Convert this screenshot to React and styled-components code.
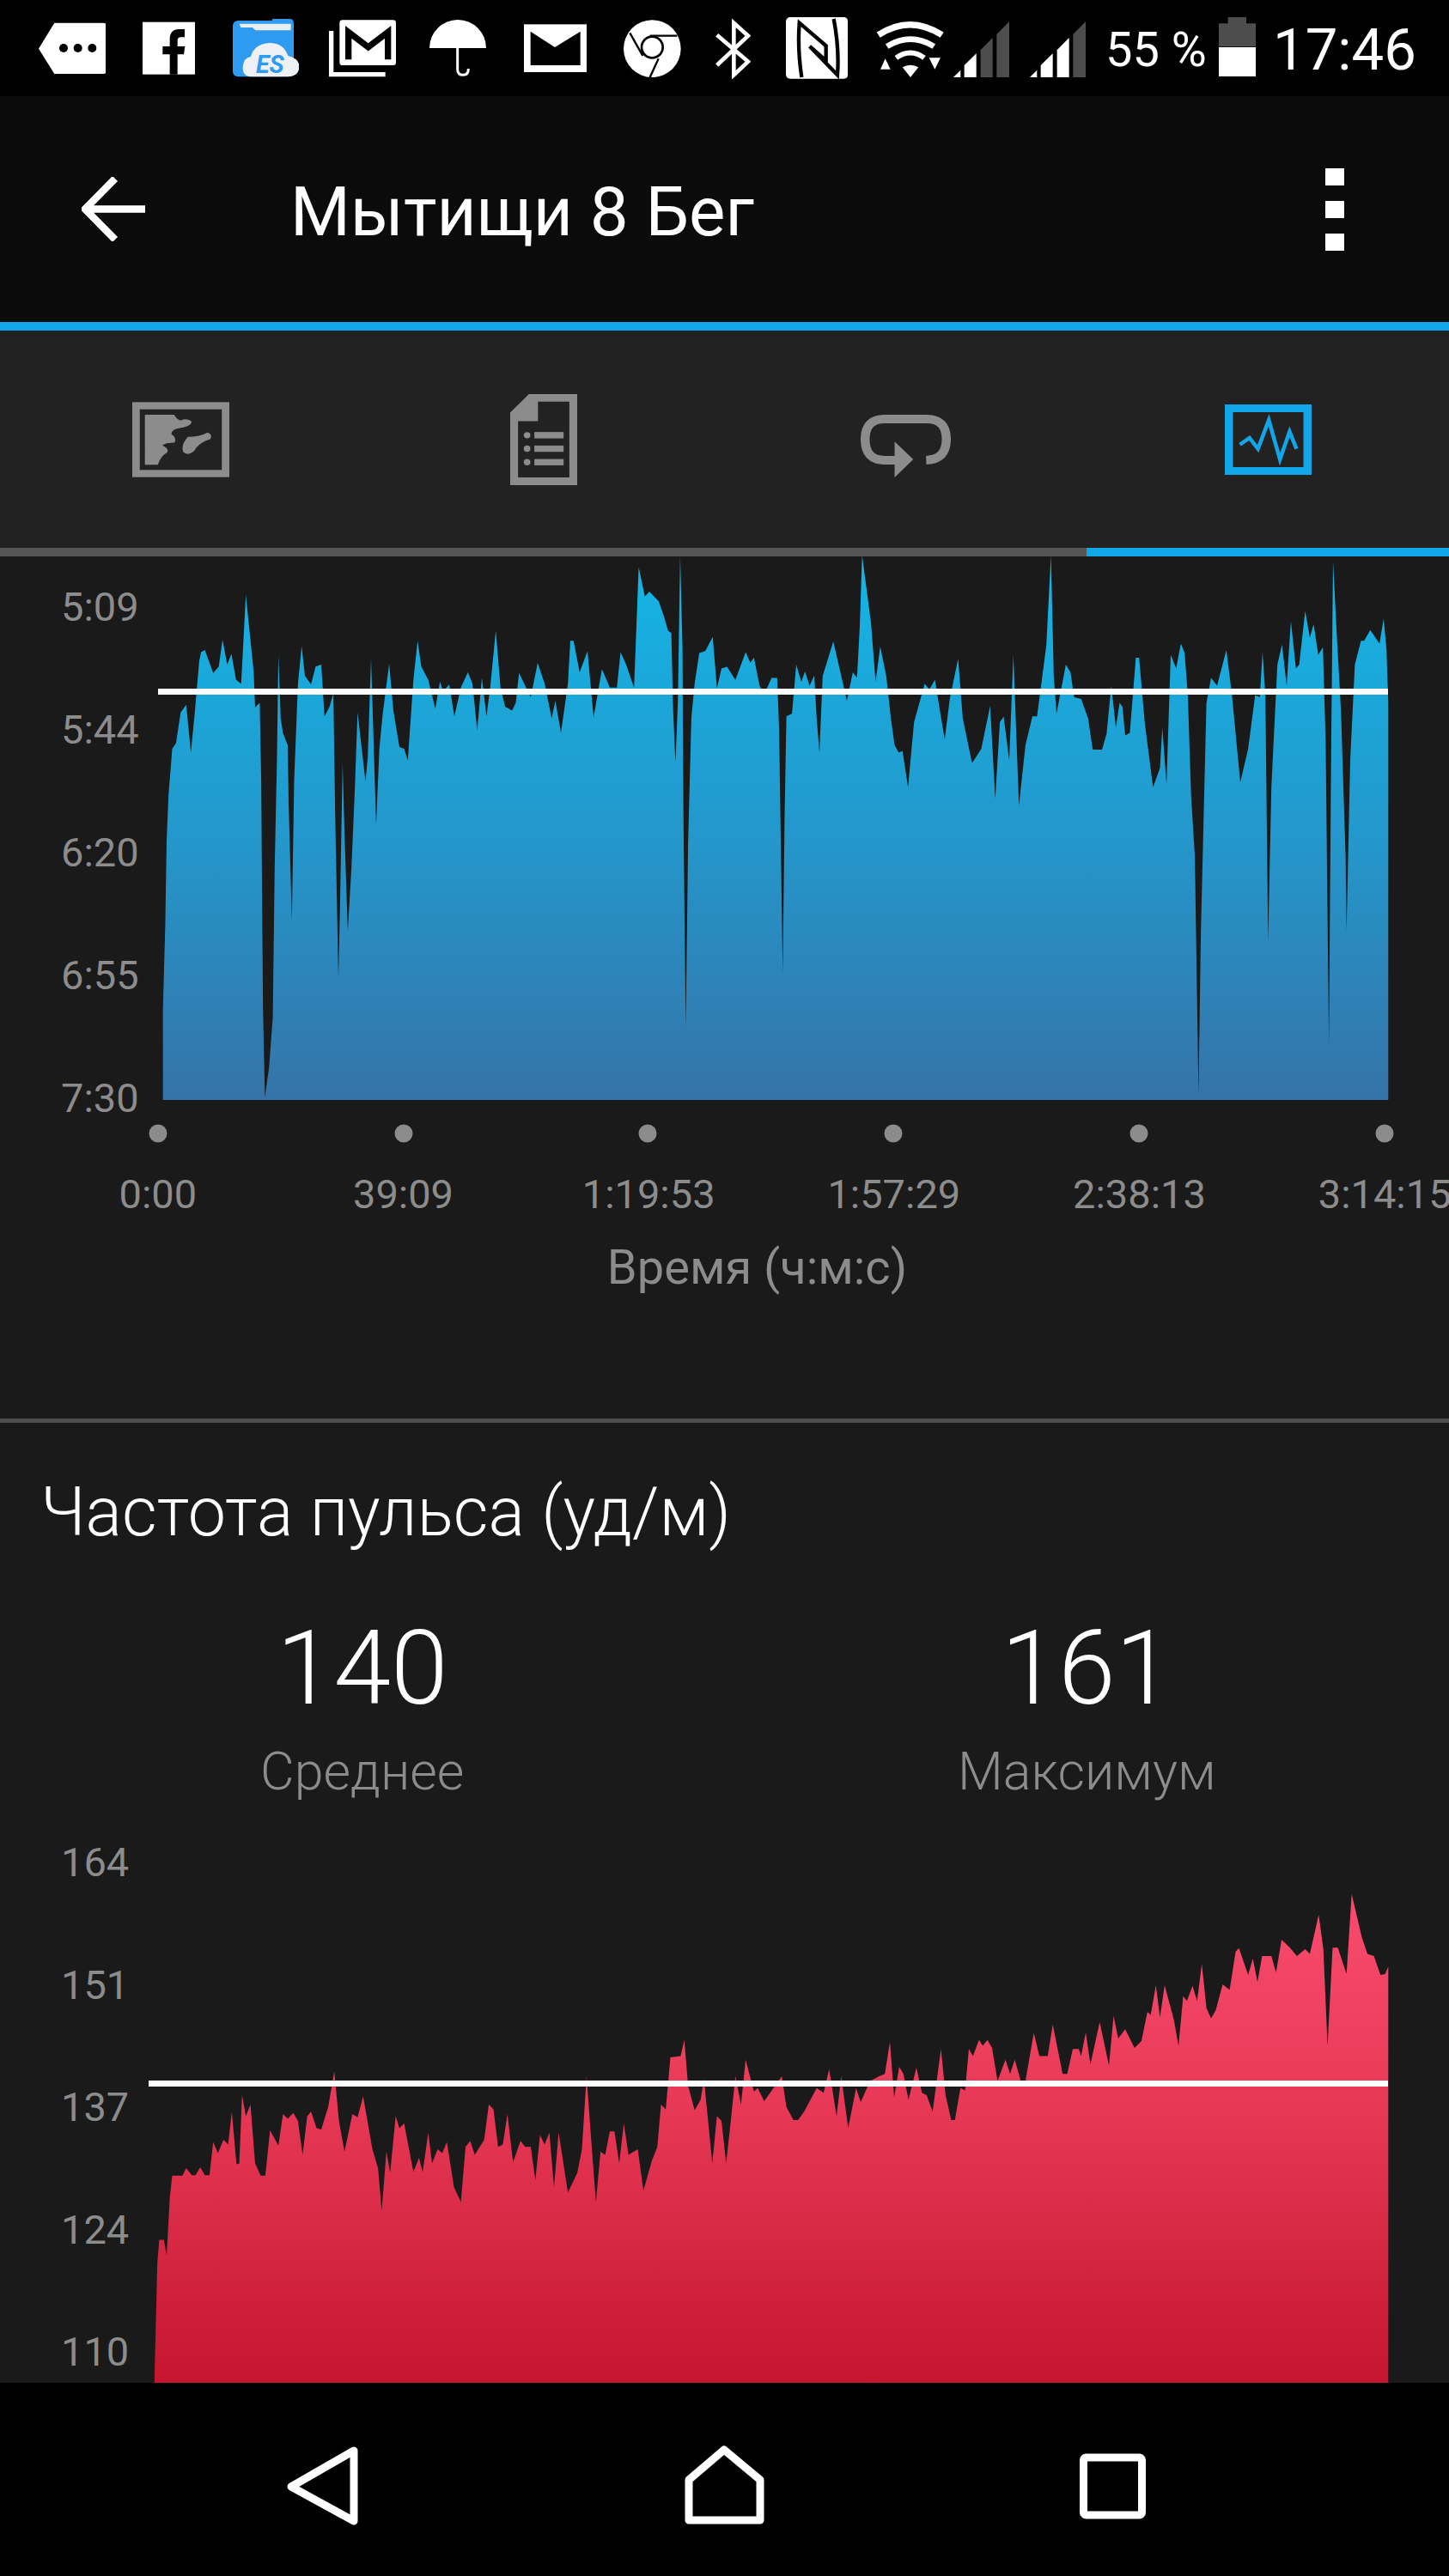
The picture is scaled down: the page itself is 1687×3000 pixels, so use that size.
import React from 'react';
import styled, { createGlobalStyle } from 'styled-components';

const GlobalStyle = createGlobalStyle`
  html, body {
    margin: 0;
    padding: 0;
    background: #000;
  }
`;

const ACCENT = '#12a5e8';
const MUTED = '#8c8c8c';

// traced outline of the pace chart, in zoomed crop pixels
const paceLeft = [[350,1436],[350,1200],[355,980],[358,760],[362,640],[366,580],[370,520],[378,505],[388,425],[400,405],[410,530],[418,430],[428,290],[432,268],[440,262],[458,322],[470,305],[478,235],[488,300],[497,272],[507,340],[518,350],[528,118],[545,320],[548,412],[558,400],[561,600],[563,900],[565,1200],[569,1428],[578,1350],[586,1220],[590,830],[595,540],[598,275],[603,440],[608,480],[618,510],[620,660],[627,968],[632,600],[640,350],[648,252],[655,330],[668,352],[678,305],[690,300],[697,435],[708,410],[716,375],[720,690],[727,1118],[730,950],[736,558],[740,740],[747,995],[755,830],[762,630],[768,425],[785,605],[790,540],[797,285],[800,400],[808,718],[815,520],[822,430],[836,298],[845,420],[858,515],[868,520],[876,550],[888,340],[897,238],[905,305],[920,340],[935,415],[945,345],[952,370],[965,352],[976,435],[990,360],[1005,320],[1015,350],[1025,472],[1035,335],[1045,435],[1053,360],[1065,212],[1075,360],[1085,410],[1100,420],[1108,400],[1115,322],[1140,385],[1155,296],[1170,350],[1185,440],[1193,395],[1205,478],[1220,350],[1225,238],[1232,238],[1245,320],[1262,265],[1275,438],[1293,312],[1310,360],[1325,360],[1333,268],[1345,300],[1362,360],[1372,46],[1385,122],[1395,110],[1415,135],[1425,170],[1435,212],[1442,218],[1446,420],[1451,555],[1456,400],[1461,15],[1466,260],[1468,700],[1473,1248],[1478,770],[1485,440],[1492,350],[1502,270],[1515,265],[1531,228],[1540,362]];
const paceRight = [[0,310],[12,306],[30,340],[52,268],[62,295],[70,282],[82,355],[92,378],[108,335],[120,335],[124,465],[127,695],[132,1105],[136,695],[140,435],[152,428],[161,300],[172,345],[180,318],[190,355],[200,328],[205,440],[211,530],[218,330],[241,240],[262,350],[270,395],[283,320],[292,335],[298,200],[303,15],[322,190],[332,345],[342,253],[355,330],[365,440],[373,510],[382,530],[390,525],[402,620],[415,450],[438,350],[448,365],[460,340],[472,430],[481,495],[492,390],[510,285],[520,440],[540,557],[560,520],[579,408],[590,650],[600,450],[608,436],[620,550],[629,275],[641,668],[655,510],[670,435],[680,435],[700,250],[710,15],[716,330],[722,428],[742,300],[752,320],[760,385],[775,390],[790,440],[800,522],[820,522],[830,480],[840,355],[850,465],[858,400],[864,410],[870,485],[880,478],[893,282],[900,282],[912,450],[930,620],[945,570],[950,465],[959,612],[968,275],[980,310],[990,245],[998,270],[1005,380],[1012,640],[1020,800],[1028,1420],[1033,1000],[1045,400],[1055,335],[1068,355],[1088,262],[1100,380],[1118,607],[1135,520],[1150,380],[1160,385],[1166,268],[1172,380],[1178,1022],[1185,620],[1198,300],[1208,248],[1218,355],[1227,187],[1238,310],[1245,300],[1258,160],[1268,230],[1276,195],[1286,275],[1296,255],[1302,500],[1309,1292],[1314,500],[1318,30],[1325,200],[1335,420],[1345,800],[1347,995],[1355,550],[1365,300],[1378,238],[1385,238],[1398,210],[1418,245],[1427,180],[1433,260],[1437,400],[1437,1436]];

const pulseLeft = [[332,1157],[332,1140],[335,1020],[338,900],[342,852],[352,852],[358,885],[365,760],[370,716],[392,716],[400,700],[412,715],[420,715],[430,698],[440,715],[450,715],[458,645],[468,668],[480,640],[490,650],[498,580],[508,692],[514,690],[520,545],[528,590],[538,565],[548,690],[560,716],[570,716],[580,620],[598,652],[608,585],[618,595],[630,583],[640,600],[650,672],[660,590],[668,580],[680,615],[690,618],[705,570],[718,495],[728,600],[740,665],[757,585],[768,592],[780,548],[800,660],[812,700],[820,790],[830,665],[838,710],[850,590],[858,615],[868,605],[888,708],[900,678],[908,708],[920,625],[928,690],[940,660],[950,668],[960,645],[975,740],[990,772],[1000,655],[1010,642],[1020,672],[1040,640],[1050,565],[1060,575],[1070,655],[1080,650],[1090,585],[1102,688],[1118,642],[1128,655],[1140,655],[1150,725],[1160,630],[1170,650],[1180,625],[1190,740],[1200,625],[1220,752],[1240,710],[1250,660],[1260,505],[1270,640],[1280,772],[1290,665],[1300,672],[1310,622],[1320,622],[1330,690],[1340,605],[1350,672],[1370,660],[1382,748],[1400,685],[1412,655],[1420,565],[1430,575],[1440,465],[1462,462],[1470,428],[1478,525],[1492,577],[1505,555],[1512,510],[1530,690],[1540,590]];
const pulseRight = [[0,600],[10,690],[20,600],[30,505],[42,565],[52,470],[70,538],[78,530],[92,558],[105,540],[130,505],[140,570],[155,598],[165,598],[178,580],[205,530],[220,540],[232,490],[248,590],[258,505],[273,615],[290,530],[300,560],[320,515],[340,505],[352,500],[363,432],[372,550],[383,485],[392,500],[403,555],[420,487],[432,540],[442,545],[455,580],[473,447],[483,545],[495,598],[503,598],[515,530],[525,535],[533,447],[542,462],[555,428],[563,440],[573,428],[583,445],[595,515],[612,470],[622,500],[632,470],[645,515],[655,515],[673,413],[685,462],[703,462],[714,395],[735,500],[745,500],[757,447],[770,447],[775,462],[785,412],[795,480],[815,390],[835,482],[845,377],[855,425],[870,405],[890,445],[905,430],[918,368],[925,375],[936,312],[945,380],[955,312],[975,385],[985,440],[995,335],[1003,345],[1015,313],[1025,345],[1035,266],[1045,360],[1055,382],[1065,365],[1080,310],[1095,322],[1108,240],[1115,233],[1135,290],[1145,255],[1155,305],[1165,250],[1185,250],[1195,285],[1207,215],[1225,232],[1240,250],[1258,235],[1268,245],[1287,162],[1297,235],[1306,440],[1317,232],[1328,232],[1347,288],[1358,118],[1380,210],[1392,245],[1406,250],[1420,290],[1430,288],[1437,272],[1437,1157]];

function toPath(left, right, top, scaleY) {
  const pts = [
    ...left.map(([x, y]) => [x / 1.845, top + y / scaleY]),
    ...right.map(([x, y]) => [840 + x / 1.851, top + y / scaleY]),
  ];
  return 'M' + pts.map(([x, y]) => `${x.toFixed(1)} ${y.toFixed(1)}`).join('L') + 'Z';
}

const pacePath = toPath(paceLeft, paceRight, 640, 2.24);
const pulsePath = toPath(pulseLeft, pulseRight, 2140, 1.823);
const dotsX = [184, 470, 754, 1040, 1326, 1612];

const Page = styled.div`
  width: 1687px;
  height: 3000px;
  display: flex;
  flex-direction: column;
  overflow: hidden;
  background: #1a1a1a;
  font-family: Roboto, "Noto Sans", sans-serif;
`;

const StatusBar = styled.div`
  height: 112px;
  flex: none;
  display: flex;
  align-items: center;
  padding-left: 45px;
  background: #000;
  color: #fff;
`;

const StatusGlyph = styled.svg`
  flex: none;
  height: 72px;
  width: ${(p) => p.$w}px;
  margin-left: ${(p) => p.$ml || 0}px;
`;

const BatteryText = styled.span`
  margin: 4px 0 0 23px;
  width: 116px;
  flex: none;
  font-size: 56px;
  white-space: nowrap;
  font-weight: 400;
`;

const Clock = styled.span`
  margin: 4px 0 0 20px;
  font-size: 67px;
  font-weight: 400;
  white-space: nowrap;
`;

const AppBar = styled.div`
  height: 263px;
  flex: none;
  display: flex;
  align-items: center;
  padding: 0 122px 0 95px;
  background: #0b0b0b;
`;

const BackArrow = styled.svg`
  flex: none;
  width: 74px;
  height: 75px;
`;

const Title = styled.h1`
  margin: 6px 0 0 169px;
  font-size: 80px;
  font-weight: 400;
  color: #fff;
  white-space: nowrap;
`;

const Overflow = styled.div`
  margin-left: auto;
  display: flex;
  flex-direction: column;
  gap: 18px;
`;

const OverflowDot = styled.span`
  display: block;
  width: 22px;
  height: 20px;
  background: #fff;
`;

const AccentLine = styled.div`
  height: 10px;
  flex: none;
  background: ${ACCENT};
`;

const Tabs = styled.div`
  height: 253px;
  flex: none;
  display: grid;
  grid-template-columns: repeat(4, 1fr);
  align-items: center;
  justify-items: center;
  background: #222;
`;

const TabIcon = styled.svg`
  width: ${(p) => p.$w}px;
  height: ${(p) => p.$h}px;
  margin-top: ${(p) => p.$dy || 0}px;
`;

const TabIndicator = styled.div`
  height: 10px;
  flex: none;
  display: grid;
  grid-template-columns: 3fr 1fr;
  background: ${ACCENT};

  &::before {
    content: "";
    background: #555;
  }
`;

const Content = styled.main`
  flex: 1;
  min-height: 0;
  overflow: hidden;
`;

const ChartRow = styled.div`
  display: flex;
  height: ${(p) => p.$h}px;
`;

const YAxis = styled.div`
  flex: none;
  width: 170px;
  box-sizing: border-box;
  padding: ${(p) => p.$top}px 0 ${(p) => p.$bottom}px 71px;
  display: flex;
  flex-direction: column;
  justify-content: space-between;
`;

const AxisLabel = styled.span`
  font-size: 47px;
  line-height: 50px;
  color: ${MUTED};
  white-space: nowrap;
`;

const Plot = styled.svg`
  flex: none;
  width: 1517px;
  height: 100%;
  display: block;
`;

const XAxis = styled.div`
  margin: 31px 0 0 41px;
  width: 1714px;
  display: grid;
  grid-template-columns: repeat(6, 1fr);
  justify-items: center;
`;

const AxisTitle = styled.div`
  margin-top: 30px;
  padding-left: 76px;
  text-align: center;
  font-size: 56px;
  line-height: 60px;
  color: ${MUTED};
`;

const Divider = styled.hr`
  margin: 146px 0 0;
  border: 0;
  height: 5px;
  background: #4d4d4d;
`;

const SectionTitle = styled.h2`
  margin: 59px 0 0 47px;
  font-size: 79px;
  line-height: 90px;
  font-weight: 300;
  color: #fff;
  white-space: nowrap;
`;

const Stats = styled.div`
  margin-top: 67px;
  display: grid;
  grid-template-columns: 1fr 1fr;
  text-align: center;
`;

const StatValue = styled.div`
  font-size: 120px;
  line-height: 140px;
  font-weight: 300;
  color: #fff;
`;

const StatLabel = styled.div`
  margin-top: 15px;
  font-size: 61px;
  line-height: 70px;
  font-weight: 300;
  color: ${MUTED};
`;

const NavBar = styled.nav`
  height: 225px;
  flex: none;
  box-sizing: border-box;
  padding: 15px 0 0 330px;
  display: flex;
  align-items: center;
  background: #000;
`;

const NavIcon = styled.svg`
  flex: none;
  width: ${(p) => p.$w}px;
  height: ${(p) => p.$h}px;
  margin-left: ${(p) => p.$ml || 0}px;
  fill: none;
  stroke: #fff;
  stroke-width: 9;
  stroke-linejoin: round;
`;

function Glyph({ x, w, ml, children }) {
  return (
    <StatusGlyph $w={w} $ml={ml} viewBox={`${x} 30 ${w * 3} 216`}>
      {children}
    </StatusGlyph>
  );
}

function SignalBars({ x, lit }) {
  const bars = [
    `${x},240 ${x + 25},240 ${x + 25},215`,
    `${x + 38},240 ${x + 80},240 ${x + 80},157 ${x + 38},198`,
    `${x + 95},240 ${x + 137},240 ${x + 137},102 ${x + 95},145`,
    `${x + 151},240 ${x + 195},240 ${x + 195},45 ${x + 151},90`,
  ];
  return bars.map((b, i) => <polygon key={i} points={b} fill={i < lit ? '#fff' : '#4d4d4d'} />);
}

function StatusIcons() {
  return (
    <>
      <Glyph x={45} w={78}>
        <path d="M100 50H272Q280 50 280 58V220Q280 228 272 228H100L45 140Z" fill="#fff" />
        <circle cx="132" cy="138" r="15" fill="#000" />
        <circle cx="182" cy="138" r="15" fill="#000" />
        <circle cx="232" cy="138" r="15" fill="#000" />
      </Glyph>
      <Glyph x={408} w={61} ml={43}>
        <rect x="408" y="47" width="183" height="183" fill="#fff" />
        <path d="M555 72H535Q503 72 503 108V132H478V160H503V230H530V160H552L556 132H530V112Q530 100 542 100H555Z" fill="#000" />
      </Glyph>
      <Glyph x={722} w={77} ml={44}>
        <rect x="722" y="42" width="213" height="196" rx="18" fill="#2f9bf0" />
        <path d="M860 36H920Q935 36 935 52V60H860Z" fill="#2f9bf0" />
        <path d="M745 53H925V76H802L790 66H750Z" fill="#e8eef2" />
        <path d="M790 238Q755 238 757 203Q760 172 785 168Q795 125 850 120Q900 120 915 165Q955 175 955 205Q950 238 915 238Z" fill="#eef1f3" />
        <text x="803" y="226" fontFamily="Roboto, sans-serif" fontSize="86" fontWeight="700" fontStyle="italic" fill="#2f9bf0">ES</text>
      </Glyph>
      <Glyph x={1058} w={78} ml={35}>
        <path d="M1066 78V230H1255" fill="none" stroke="#fff" strokeWidth="16" />
        <rect x="1095" y="40" width="197" height="158" rx="10" fill="#fff" />
        <path d="M1126 178V82L1195 135L1264 82V178" fill="none" stroke="#000" strokeWidth="22" />
      </Glyph>
      <Glyph x={0} w={66} ml={39}>
        <path d="M0 138A99 99 0 0 1 198 138Z" fill="#fff" />
        <path d="M98 130V212Q98 232 118 232Q136 232 136 210" fill="none" stroke="#fff" strokeWidth="9" />
      </Glyph>
      <Glyph x={330} w={73} ml={44}>
        <rect x="330" y="55" width="220" height="167" fill="#fff" />
        <path d="M353 80L438 135L527 80V198H353Z" fill="#000" />
      </Glyph>
      <Glyph x={678} w={67} ml={43}>
        <circle cx="778" cy="140" r="100" fill="#fff" />
        <path d="M700 85L745 165M770 95H865M800 175L770 240" stroke="#000" strokeWidth="7" fill="none" />
        <circle cx="778" cy="135" r="37" fill="#fff" stroke="#000" strokeWidth="8" />
      </Glyph>
      <Glyph x={995} w={42} ml={39}>
        <path d="M1003 198L1112 95L1062 50V232L1112 185L1003 92" fill="none" stroke="#fff" strokeWidth="14" />
      </Glyph>
      <Glyph x={1245} w={72} ml={41}>
        <rect x="1245" y="30" width="217" height="215" rx="15" fill="#fff" />
        <path d="M1300 240Q1285 140 1292 50L1385 130V182L1328 132L1425 232Q1432 140 1412 36" fill="none" stroke="#000" strokeWidth="13" />
      </Glyph>
      <Glyph x={60} w={79} ml={33}>
        <g fill="none" stroke="#fff">
          <path d="M68 92Q178 20 290 92" strokeWidth="22" />
          <path d="M98 132Q180 82 262 132" strokeWidth="20" />
          <path d="M130 172Q180 137 228 172" strokeWidth="18" />
        </g>
        <path d="M152 205Q180 190 208 205L180 240Z" fill="#fff" />
        <path d="M75 212H110L92 175ZM245 172H285L265 212Z" fill="#fff" />
      </Glyph>
      <Glyph x={330} w={65} ml={11}>
        <SignalBars x={330} lit={2} />
      </Glyph>
      <Glyph x={597} w={65} ml={24}>
        <SignalBars x={597} lit={3} />
      </Glyph>
    </>
  );
}

function AreaChart({ height, viewBox, path, gradientId, stops, lineY, lineX, labels, top, bottom, dots }) {
  return (
    <ChartRow $h={height}>
      <YAxis $top={top} $bottom={bottom}>
        {labels.map((l) => (
          <AxisLabel key={l}>{l}</AxisLabel>
        ))}
      </YAxis>
      <Plot viewBox={viewBox}>
        <defs>
          <linearGradient id={gradientId} gradientUnits="userSpaceOnUse" x1="0" x2="0" y1={stops.from} y2={stops.to}>
            {stops.colors.map(([o, c]) => (
              <stop key={o} offset={o} stopColor={c} />
            ))}
          </linearGradient>
        </defs>
        <path d={path} fill={`url(#${gradientId})`} />
        <rect x={lineX} y={lineY} width={1616 - lineX} height="7" fill="#fff" />
        {dots && dots.map((x) => <circle key={x} cx={x} cy="1320" r="10.5" fill={MUTED} />)}
      </Plot>
    </ChartRow>
  );
}

export default function App() {
  return (
    <Page>
      <GlobalStyle />
      <StatusBar>
        <StatusIcons />
        <BatteryText>55 %</BatteryText>
        <StatusGlyph $w={43} $ml={16} viewBox="1256 30 129 216">
          <path d="M1288 30H1352V52H1385V133H1256V52H1288Z" fill="#4d4d4d" />
          <rect x="1256" y="135" width="129" height="102" fill="#fff" />
        </StatusGlyph>
        <Clock>17:46</Clock>
      </StatusBar>

      <AppBar>
        <BackArrow viewBox="95 206 74 75">
          <path d="M169 243.5H102M134 208L99 243.5L134 279" fill="none" stroke="#fff" strokeWidth="8.5" />
        </BackArrow>
        <Title>Мытищи 8 Бег</Title>
        <Overflow>
          <OverflowDot />
          <OverflowDot />
          <OverflowDot />
        </Overflow>
      </AppBar>
      <AccentLine />

      <Tabs>
        <TabIcon $w={113} $h={88} viewBox="40 63 323 263" preserveAspectRatio="none">
          <rect x="52.5" y="76.5" width="298" height="236" fill="none" stroke={MUTED} strokeWidth="25" />
          <path d="M82 108H180Q185 122 200 128Q225 118 238 132Q235 150 195 155Q170 160 170 175Q190 190 180 205Q150 205 140 215Q165 228 155 240Q135 250 125 282H82Z" fill={MUTED} />
          <path d="M225 185Q265 185 290 170Q308 175 300 192Q260 205 245 235Q225 252 210 238Q200 215 225 185Z" fill={MUTED} />
        </TabIcon>
        <TabIcon $w={78} $h={106} viewBox="1290 36 222 317" preserveAspectRatio="none">
          <path fillRule="evenodd" d="M1352 36H1512V353H1290V100ZM1382 62V130H1316V326H1486V62Z" fill={MUTED} />
          <g fill={MUTED}>
            <circle cx="1346" cy="179" r="11" />
            <circle cx="1346" cy="226" r="11" />
            <circle cx="1346" cy="273" r="11" />
            <rect x="1370" y="168" width="97" height="22" />
            <rect x="1370" y="215" width="97" height="22" />
            <rect x="1370" y="262" width="97" height="22" />
          </g>
        </TabIcon>
        <TabIcon $w={105} $h={73} $dy={15} viewBox="30 112 300 218" preserveAspectRatio="none">
          <path d="M150 270H110Q45 270 45 198Q45 127 110 127H250Q315 127 315 198Q315 268 248 270" fill="none" stroke={MUTED} strokeWidth="30" />
          <path d="M143 205L205 267L143 330Z" fill={MUTED} />
        </TabIcon>
        <TabIcon $w={101} $h={82} viewBox="1238 70 288 246" preserveAspectRatio="none">
          <rect x="1251.5" y="83.5" width="261" height="219" fill="none" stroke={ACCENT} strokeWidth="27" />
          <path d="M1288 210L1320 187L1348 225L1384 125L1421 262L1453 165L1476 225" fill="none" stroke={ACCENT} strokeWidth="13" />
        </TabIcon>
      </Tabs>
      <TabIndicator />

      <Content>
        <AreaChart
          height={687}
          viewBox="170 648 1517 687"
          path={pacePath}
          gradientId="pace"
          stops={{ from: 660, to: 1281, colors: [[0, '#14b4e4'], [0.5, '#2398cc'], [1, '#3573a8']] }}
          lineX={184}
          lineY={802}
          labels={['5:09', '5:44', '6:20', '6:55', '7:30']}
          top={34}
          bottom={31}
          dots={dotsX}
        />
        <XAxis>
          {['0:00', '39:09', '1:19:53', '1:57:29', '2:38:13', '3:14:15'].map((t) => (
            <AxisLabel key={t}>{t}</AxisLabel>
          ))}
        </XAxis>
        <AxisTitle>Время (ч:м:с)</AxisTitle>
        <Divider />

        <SectionTitle>Частота пульса (уд/м)</SectionTitle>
        <Stats>
          <div>
            <StatValue>140</StatValue>
            <StatLabel>Среднее</StatLabel>
          </div>
          <div>
            <StatValue>161</StatValue>
            <StatLabel>Максимум</StatLabel>
          </div>
        </Stats>
        <AreaChart
          height={678}
          viewBox="170 2097 1517 678"
          path={pulsePath}
          gradientId="pulse"
          stops={{ from: 2220, to: 2775, colors: [[0, '#f84a6c'], [0.4, '#e83a58'], [1, '#c5152f']] }}
          lineX={173}
          lineY={2422}
          labels={['164', '151', '137', '124', '110']}
          top={46}
          bottom={12}
        />
      </Content>

      <NavBar>
        <NavIcon $w={90} $h={100} viewBox="330 2845 90 100">
          <path d="M339 2896L412 2854V2936Z" />
        </NavIcon>
        <NavIcon $w={100} $h={100} $ml={373} viewBox="793 2845 100 100">
          <path d="M843 2853L885 2888V2935H802V2888Z" />
        </NavIcon>
        <NavIcon $w={90} $h={90} $ml={358} viewBox="1250 2850 90 90">
          <rect x="1260.5" y="2862" width="68" height="67" rx="3" />
        </NavIcon>
      </NavBar>
    </Page>
  );
}
